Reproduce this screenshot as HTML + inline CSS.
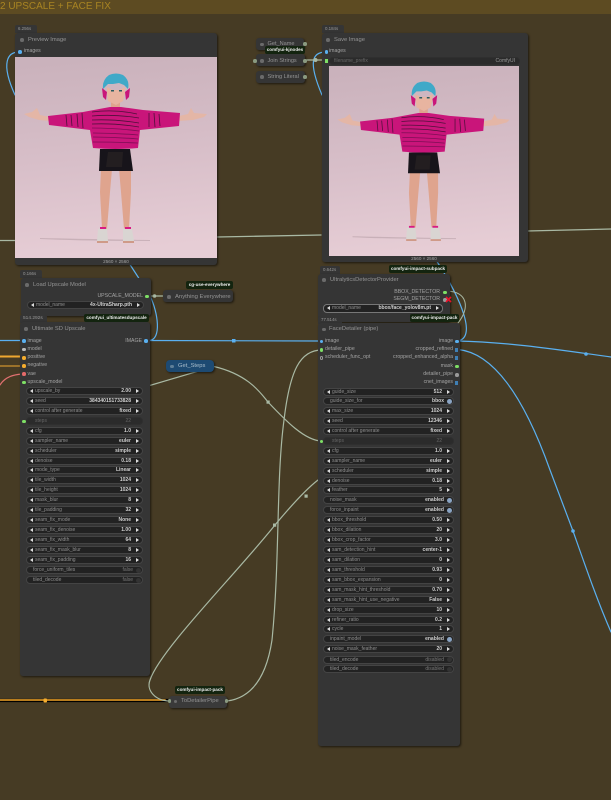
<!DOCTYPE html>
<html><head><meta charset="utf-8">
<style>
html,body{margin:0;padding:0;overflow:hidden;width:611px;height:800px;background:#463b24}
#page{width:611px;height:800px;overflow:hidden;background:#463b24;position:relative;font-family:"Liberation Sans",sans-serif;font-size:5.4px;color:#aaa;filter:blur(.3px)}
.a{position:absolute}
.band{left:0;top:0;width:611px;height:14px;background:#5d4b22}
.gt{left:0;top:1px;font-size:10px;line-height:12px;color:#a88422;white-space:nowrap}
.n{position:absolute;background:#353535;border-radius:3px;box-shadow:1px 1px 2px #0009}
.t{position:absolute;font-size:5.8px;line-height:8px;color:#959595;white-space:nowrap}
.d{position:absolute;width:3.5px;height:3.5px;border-radius:50%;background:#6b6b6b}
.badge{position:absolute;background:#353535;border-radius:2px 2px 0 0;color:#999;font-size:4.4px;line-height:8px;padding-left:3px;height:8px;box-sizing:border-box}
.tag{position:absolute;background:#13240f;color:#eee;font-size:4.6px;font-weight:bold;line-height:8px;height:8px;text-align:center;border-radius:2px;white-space:nowrap;z-index:5}
.l{position:absolute;font-size:5.2px;line-height:7px;color:#a4a4a4;white-space:nowrap}
.r{text-align:right}
.p{position:absolute;width:3.500px;height:3.500px;border-radius:50%}
.s{position:absolute;width:3.5px;height:3.5px;background:#3f7fb5}
.blue{background:#5ab0f0}.green{background:#7ee066}.org{background:#f5ad2e}.red{background:#e46a6a}.gray{background:#9a9a9a}
.col{position:absolute;left:0;top:0}
.w{position:absolute;height:8px;box-sizing:border-box;background:#222;border:1px solid #444;border-radius:4px;color:#8e8e8e;font-size:5px;line-height:6px;white-space:nowrap}
.w b{position:absolute;right:11px;top:0;color:#d0d0d0;font-weight:bold}
.w i{position:absolute;left:8px;top:0;font-style:normal}
.w:before{content:"";position:absolute;left:3px;top:1px;border:2px solid transparent;border-left:0;border-right:3px solid #ddd}
.w:after{content:"";position:absolute;right:3px;top:1px;border:2px solid transparent;border-right:0;border-left:3px solid #ddd}
.w.o:before,.w.o:after{display:none}
.w.o i{left:6px}
.w.o b{right:9px}
.w.o u{position:absolute;right:1px;top:.5px;width:5px;height:5px;border-radius:50%;background:#8aa4c4}
.w.off b{color:#777;font-weight:normal}
.w.off u{background:#333}
.w.st{background:#2b2b2b;border-color:#2f2f2f;color:#666}
.w.st:before,.w.st:after{display:none}
.w.st b{color:#666;font-weight:normal}
.img{position:absolute;overflow:hidden}
svg.links{position:absolute;left:0;top:0;z-index:1}
.top{position:absolute;left:0;top:0;width:611px;height:800px;z-index:2}
</style></head><body>
<div id="page">
<svg width="0" height="0" style="position:absolute"><defs>
<linearGradient id="bg" x1="0" y1="0" x2="0.1" y2="1"><stop offset="0" stop-color="#c9b1bb"/><stop offset=".55" stop-color="#d8bfc9"/><stop offset="1" stop-color="#e6cdd5"/></linearGradient>
<symbol id="girl" viewBox="0 0 202 202">
<rect width="202" height="202" fill="url(#bg)"/>
<path d="M25 181Q70 182 135 183L135 184Q70 184 25 182Z" fill="#a08a90" opacity=".4"/>
<path d="M9 57 17 55 22 51 25 58 35 60 35 64 24 63 14 60Z" fill="#e4b6a6"/>
<path d="M164 59 173 57 176 51 179 56 192 57 189 60 178 63 164 64Z" fill="#e4b6a6"/>
<path d="M86 112H97L95 135 92 172H87L85 135Z" fill="#dfa48e"/>
<path d="M104 112H116L116 135 114 172H109L106 135Z" fill="#dfa48e"/>
<path d="M96 44H105V52H96Z" fill="#dfa48e"/>
<path d="M33 59 68 55 95 50H106L128 53 165 56 164 69 125 73 123 91Q100 93 78 91L75 73 34 68Z" fill="#c9157a"/>
<g stroke="#3a1030" stroke-width=".8" fill="none" opacity=".85">
<path d="M51 58 52 69M56 58 57 69M62 57 63 70M67 56 68 71"/><path d="M134 56 134 70M139 56 140 70M144 57 145 69"/>
<path d="M77 55Q100 52 122 57M77 59Q100 57 124 61M77 63Q100 62 124 66M77 67Q100 66 124 70"/></g>
<g stroke="#7d0e55" stroke-width=".8" fill="none">
<path d="M77 71Q100 71 124 74M78 76Q100 76 123 78M78 80Q100 80 123 82M78 85Q100 85 123 86"/></g>
<path d="M85 92H115L118 114H84Z" fill="#17141a"/><path d="M93 95H108L107 110H91Z" fill="#231e20"/>
<path d="M83 172Q87 170 92 172L93 184H82Z" fill="#d9d5d2"/><path d="M108 172Q113 170 117 172L119 184H108Z" fill="#d9d5d2"/>
<path d="M85 170H91V172H85ZM110 170H116V172H110Z" fill="#d81c84"/>
<path d="M82 184H93V186H82ZM108 184H119V186H108Z" fill="#cf9a88"/>
<path d="M93 44 92 36 92 30 97 33 105 33 110 30 110 36 108 44 101 48Z" fill="#e8b4a0"/>
<path d="M87 31 88 40 91 43 92 35ZM115 31 114 40 111 43 110 35Z" fill="#c9157a"/>
<path d="M88 32Q87 23 94 18 101 15 108 18 115 23 113 32L109 28 104 26 98 27 93 27Z" fill="#3fa9c8"/>
<path d="M96 33h3v1.500h-3zM104 33h3v1.500h-3z" fill="#2b5b60"/>
</symbol></defs></svg>

<div class="a band"></div>
<div class="a gt">2 UPSCALE + FACE FIX</div>

<svg class="links" width="611" height="800" fill="none" stroke-linecap="round">
<path d="M0 240.500H20M217 237L321 235M527 231L611 229" stroke="#a9b9a4" stroke-width="1.300"/>
<path d="M0 700.500H170" stroke="#000" stroke-width="3.200"/>
<path d="M0 700H165" stroke="#d38f22" stroke-width="1.800"/>
<path d="M0 357H22M0 366H22" stroke="#f0a830" stroke-width="1.100"/>
<path d="M0 356H22" stroke="#f0a830" stroke-width=".9"/>
<path d="M0 385Q6 375 22 374" stroke="#e07070" stroke-width="1.200"/>
<path d="M19 52C8 52 0 62 15 95" stroke="#5ab0f0" stroke-width="1.200"/>
<path d="M326 52C312 52 308 62 322 95" stroke="#5ab0f0" stroke-width="1.200"/>
<path d="M129 263L140 280" stroke="#5ab0f0" stroke-width="1.200"/>
<path d="M150 296C158 312 162 340 149 340.500" stroke="#5ab0f0" stroke-width="1.200"/>
<path d="M0 340.500H23" stroke="#5ab0f0" stroke-width="1.200"/>
<path d="M146 340.500L320 341" stroke="#5ab0f0" stroke-width="1.200"/>
<path d="M436 260C462 300 478 340 456 341" stroke="#5ab0f0" stroke-width="1.200"/>
<path d="M456 341C510 342 560 350 611 357" stroke="#5ab0f0" stroke-width="1.200"/>
<path d="M458 349.500C495 353 525 400 550 470L573 531C585 565 597 600 611 632" stroke="#5ab0f0" stroke-width="1.200"/>
<path d="M447 291C468 292 470 308 458 323" stroke="#a9b9a4" stroke-width="1"/>
<path d="M148 386L214 366.500C250 375 262 395 268 402C285 420 305 441 322 441" stroke="#a9b9a4" stroke-width="1.200"/>
<path d="M170 701C155 701 146 690 150 680C160 650 235 575 275 525C290 507 305 490 318 480" stroke="#a9b9a4" stroke-width="1.200"/>
<path d="M227 701C250 698 266 680 272 640C280 560 276 480 284 420C290 370 300 350 322 350" stroke="#a9b9a4" stroke-width="1.200"/>
<path d="M300 60H326" stroke="#a9b9a4" stroke-width="1.200"/>
<path d="M148 296H163" stroke="#a9b9a4" stroke-width="1.200"/>
<rect x="43.500" y="698.500" width="3.500" height="4" rx="1" fill="#f5ad2e"/>
<rect x="232" y="339" width="3.500" height="3.500" fill="#5ab0f0"/>
<circle cx="586" cy="354" r="1.800" fill="#5ab0f0"/>
<circle cx="573" cy="531" r="1.800" fill="#5ab0f0"/>
<rect x="266.500" y="400.500" width="3.200" height="3.200" fill="#a9b9a4"/>
<rect x="273" y="523.500" width="3.200" height="3.200" fill="#a9b9a4"/>
<rect x="304.500" y="494.500" width="3.200" height="3.200" fill="#a9b9a4"/>
<circle cx="315.500" cy="60" r="2" fill="#a9b9a4"/>
<circle cx="154.500" cy="296" r="1.800" fill="#a9b9a4"/>
</svg>

<div class="top">
<div class="badge" style="left:15px;top:25px;width:22px">6.256s</div>
<div class="n" style="left:15px;top:33px;width:202px;height:232px"></div>
<div class="d" style="left:20px;top:38px"></div><div class="t" style="left:28px;top:36px">Preview Image</div>
<div class="p blue" style="left:18px;top:50px"></div><div class="l" style="left:24px;top:48px">images</div>
<div class="img" style="left:15px;top:57px;width:202px;height:201px"><svg width="202" height="202"><use href="#girl"/></svg></div>
<div class="l" style="left:15px;top:257.500px;width:202px;text-align:center;font-size:4.6px">2560 × 2560</div>

<div class="n" style="left:256px;top:38px;width:48px;height:12px"></div><div class="d" style="left:260px;top:42.500px"></div><div class="t" style="left:267.500px;top:40px;font-size:5.6px">Get_Name</div>
<div class="n" style="left:256px;top:54px;width:49px;height:12px"></div><div class="d" style="left:260px;top:59px"></div><div class="t" style="left:267.500px;top:56.500px;font-size:5.6px">Join Strings</div>
<div class="n" style="left:256px;top:71px;width:49px;height:12px"></div><div class="d" style="left:260px;top:75px"></div><div class="t" style="left:267.500px;top:72.500px;font-size:5.6px">String Literal</div>
<div class="p gray" style="left:303px;top:42px;background:#8a9a80"></div>
<div class="p gray" style="left:253px;top:59px;background:#8a9a80"></div>
<div class="p gray" style="left:303px;top:59px;background:#8a9a80"></div>
<div class="p gray" style="left:303px;top:75px;background:#8a9a80"></div>
<div class="tag" style="left:265px;top:46px;width:40px">comfyui-kjnodes</div>

<div class="badge" style="left:322px;top:25px;width:22px">0.184s</div>
<div class="n" style="left:321.500px;top:33px;width:206px;height:229px"></div>
<div class="d" style="left:326px;top:38px"></div><div class="t" style="left:334px;top:36px">Save Image</div>
<div class="p blue" style="left:324.500px;top:50px"></div><div class="l" style="left:329px;top:48px">images</div>
<div class="a green" style="left:324.500px;top:59px;width:3.500px;height:3.500px"></div>
<div class="w st" style="left:329px;top:57px;width:191px;height:8px"><i style="left:4px">filename_prefix</i><b style="right:4px;color:#999">ComfyUI</b></div>
<div class="img" style="left:329px;top:66px;width:190px;height:190px"><svg width="190" height="190"><use href="#girl"/></svg></div>
<div class="l" style="left:321px;top:255px;width:206px;text-align:center;font-size:4.6px">2560 × 2560</div>

<div class="badge" style="left:20px;top:270px;width:22px">0.166s</div>
<div class="n" style="left:21px;top:278px;width:130px;height:38px"></div>
<div class="d" style="left:25px;top:283px"></div><div class="t" style="left:33px;top:281px">Load Upscale Model</div>
<div class="l r" style="right:468px;top:293px">UPSCALE_MODEL</div><div class="p green" style="left:145px;top:294.500px"></div>
<div class="w" style="left:27px;top:301px;width:117px;height:8px"><i>model_name</i><b>4x-UltraSharp.pth</b></div>

<div class="n" style="left:163px;top:290px;width:70px;height:12px"></div><div class="d" style="left:167px;top:295px"></div><div class="t" style="left:175px;top:292.500px;font-size:5.900px">Anything Everywhere</div>
<div class="tag" style="left:186px;top:281px;width:47px">cg-use-everywhere</div>

<div class="badge" style="left:20px;top:315px;width:27px;font-size:4.8px">514.292s</div>
<div class="n" style="left:20px;top:322px;width:130px;height:354px"></div>
<div class="tag" style="left:84px;top:314px;width:65px">comfyui_ultimatesdupscale</div>
<div class="d" style="left:24px;top:327px"></div><div class="t" style="left:32px;top:324.500px">Ultimate SD Upscale</div>
<div class="p blue" style="left:22px;top:339px"></div><div class="l" style="left:27.500px;top:337.500px">image</div>
<div class="l r" style="right:469px;top:337.500px">IMAGE</div><div class="p blue" style="left:144px;top:339px"></div>
<div class="p" style="left:22px;top:347.500px;background:#bbb"></div><div class="l" style="left:27.500px;top:345.500px">model</div>
<div class="p org" style="left:22px;top:356px"></div><div class="l" style="left:27.500px;top:354px">positive</div>
<div class="p org" style="left:22px;top:364px"></div><div class="l" style="left:27.500px;top:362px">negative</div>
<div class="p red" style="left:22px;top:372px"></div><div class="l" style="left:27.500px;top:370.500px">vae</div>
<div class="p green" style="left:22px;top:380.500px"></div><div class="l" style="left:27.500px;top:378.500px">upscale_model</div>
<div class="p green" style="left:22px;top:419.500px"></div>

<div class="col" style="left:26px;width:117px">
<div class="w" style="top:387px;width:117px"><i>upscale_by</i><b>2.00</b></div>
<div class="w" style="top:397px;width:117px"><i>seed</i><b>384340151733828</b></div>
<div class="w" style="top:407px;width:117px"><i>control after generate</i><b>fixed</b></div>
<div class="w st" style="top:417px;width:117px"><i>steps</i><b>22</b></div>
<div class="w" style="top:427px;width:117px"><i>cfg</i><b>1.0</b></div>
<div class="w" style="top:437px;width:117px"><i>sampler_name</i><b>euler</b></div>
<div class="w" style="top:447px;width:117px"><i>scheduler</i><b>simple</b></div>
<div class="w" style="top:457px;width:117px"><i>denoise</i><b>0.18</b></div>
<div class="w" style="top:466px;width:117px"><i>mode_type</i><b>Linear</b></div>
<div class="w" style="top:476px;width:117px"><i>tile_width</i><b>1024</b></div>
<div class="w" style="top:486px;width:117px"><i>tile_height</i><b>1024</b></div>
<div class="w" style="top:496px;width:117px"><i>mask_blur</i><b>8</b></div>
<div class="w" style="top:506px;width:117px"><i>tile_padding</i><b>32</b></div>
<div class="w" style="top:516px;width:117px"><i>seam_fix_mode</i><b>None</b></div>
<div class="w" style="top:526px;width:117px"><i>seam_fix_denoise</i><b>1.00</b></div>
<div class="w" style="top:536px;width:117px"><i>seam_fix_width</i><b>64</b></div>
<div class="w" style="top:546px;width:117px"><i>seam_fix_mask_blur</i><b>8</b></div>
<div class="w" style="top:556px;width:117px"><i>seam_fix_padding</i><b>16</b></div>
<div class="w o off" style="top:566px;width:117px"><i>force_uniform_tiles</i><b>false</b><u></u></div>
<div class="w o off" style="top:576px;width:117px"><i>tiled_decode</i><b>false</b><u></u></div>
</div>

<div class="n" style="left:166px;top:360px;width:48px;height:12px;background:#1d4a72;border-radius:4px"></div><div class="d" style="left:170px;top:364.500px;background:#5f7f98"></div><div class="t" style="left:178px;top:362px;color:#a9bdcb">Get_Steps</div>

<div class="badge" style="left:320px;top:266px;width:20px">0.642s</div>
<div class="n" style="left:318px;top:274px;width:132px;height:48px"></div>
<div class="d" style="left:322px;top:278px"></div><div class="t" style="left:330px;top:276px">UltralyticsDetectorProvider</div>
<div class="l r" style="right:171px;top:288.500px">BBOX_DETECTOR</div><div class="p green" style="left:443px;top:290.500px"></div>
<div class="l r" style="right:171px;top:296px">SEGM_DETECTOR</div><div class="p gray" style="left:443px;top:298px"></div>
<div class="w" style="left:323px;top:304px;width:120px;height:9px;border-color:#777"><i>model_name</i><b>bbox/face_yolov8m.pt</b></div>
<div class="tag" style="left:389px;top:264.500px;width:58px">comfyui-impact-subpack</div>
<svg class="a" style="left:445px;top:295.500px;z-index:6" width="8" height="8"><path d="M1 1L6 6M6 1L1 6" stroke="#e8102a" stroke-width="1.600"/></svg>

<div class="badge" style="left:318px;top:316px;width:24px">77.514s</div>
<div class="n" style="left:318px;top:323px;width:142px;height:423px"></div>
<div class="tag" style="left:410px;top:314px;width:49px">comfyui-impact-pack</div>
<div class="d" style="left:322px;top:327.500px"></div><div class="t" style="left:329px;top:325px">FaceDetailer (pipe)</div>
<div class="p blue" style="left:319.500px;top:339.500px"></div><div class="l" style="left:325px;top:337.500px">image</div>
<div class="p green" style="left:319.500px;top:348px"></div><div class="l" style="left:325px;top:346px">detailer_pipe</div>
<div class="p" style="left:319.500px;top:356px;border:.5px solid #999;box-sizing:border-box"></div><div class="l" style="left:325px;top:354px">scheduler_func_opt</div>
<div class="l r" style="right:158px;top:337.500px">image</div><div class="p blue" style="left:455px;top:339.500px"></div>
<div class="l r" style="right:158px;top:346px">cropped_refined</div><div class="s" style="left:454.500px;top:348px"></div>
<div class="l r" style="right:158px;top:354px">cropped_enhanced_alpha</div><div class="s" style="left:454.500px;top:356px"></div>
<div class="l r" style="right:158px;top:362.500px">mask</div><div class="p green" style="left:455px;top:364.500px"></div>
<div class="l r" style="right:158px;top:370.500px">detailer_pipe</div><div class="p gray" style="left:455px;top:373px"></div>
<div class="l r" style="right:158px;top:379px">cnet_images</div><div class="s" style="left:454.500px;top:381px"></div>
<div class="p green" style="left:319.500px;top:439.500px"></div>

<div class="col" style="left:323px;width:131px">
<div class="w" style="top:387.500px;width:131px"><i>guide_size</i><b>512</b></div>
<div class="w o" style="top:397px;width:131px"><i>guide_size_for</i><b>bbox</b><u></u></div>
<div class="w" style="top:407px;width:131px"><i>max_size</i><b>1024</b></div>
<div class="w" style="top:417px;width:131px"><i>seed</i><b>12346</b></div>
<div class="w" style="top:427px;width:131px"><i>control after generate</i><b>fixed</b></div>
<div class="w st" style="top:437px;width:131px"><i>steps</i><b>22</b></div>
<div class="w" style="top:447px;width:131px"><i>cfg</i><b>1.0</b></div>
<div class="w" style="top:457px;width:131px"><i>sampler_name</i><b>euler</b></div>
<div class="w" style="top:467px;width:131px"><i>scheduler</i><b>simple</b></div>
<div class="w" style="top:477px;width:131px"><i>denoise</i><b>0.18</b></div>
<div class="w" style="top:486px;width:131px"><i>feather</i><b>5</b></div>
<div class="w o" style="top:496px;width:131px"><i>noise_mask</i><b>enabled</b><u></u></div>
<div class="w o" style="top:506px;width:131px"><i>force_inpaint</i><b>enabled</b><u></u></div>
<div class="w" style="top:516px;width:131px"><i>bbox_threshold</i><b>0.50</b></div>
<div class="w" style="top:526px;width:131px"><i>bbox_dilation</i><b>20</b></div>
<div class="w" style="top:536px;width:131px"><i>bbox_crop_factor</i><b>3.0</b></div>
<div class="w" style="top:546px;width:131px"><i>sam_detection_hint</i><b>center-1</b></div>
<div class="w" style="top:556px;width:131px"><i>sam_dilation</i><b>0</b></div>
<div class="w" style="top:566px;width:131px"><i>sam_threshold</i><b>0.93</b></div>
<div class="w" style="top:576px;width:131px"><i>sam_bbox_expansion</i><b>0</b></div>
<div class="w" style="top:586px;width:131px"><i>sam_mask_hint_threshold</i><b>0.70</b></div>
<div class="w" style="top:596px;width:131px"><i>sam_mask_hint_use_negative</i><b>False</b></div>
<div class="w" style="top:605.500px;width:131px"><i>drop_size</i><b>10</b></div>
<div class="w" style="top:615.500px;width:131px"><i>refiner_ratio</i><b>0.2</b></div>
<div class="w" style="top:625px;width:131px"><i>cycle</i><b>1</b></div>
<div class="w o" style="top:635px;width:131px"><i>inpaint_model</i><b>enabled</b><u></u></div>
<div class="w" style="top:645px;width:131px"><i>noise_mask_feather</i><b>20</b></div>
<div class="w o off" style="top:655.500px;width:131px"><i>tiled_encode</i><b>disabled</b><u></u></div>
<div class="w o off" style="top:665px;width:131px"><i>tiled_decode</i><b>disabled</b><u></u></div>
</div>

<div class="n" style="left:169px;top:695.500px;width:58px;height:12px;background:#3a3a3a"></div>
<div class="d" style="left:173.500px;top:699.500px"></div><div class="t" style="left:181px;top:697px">ToDetailerPipe</div>
<div class="p gray" style="left:167.500px;top:699px;background:#8a9a80"></div>
<div class="p gray" style="left:224.500px;top:699px;background:#8a9a80"></div>
<div class="tag" style="left:175px;top:686px;width:50px">comfyui-impact-pack</div>
</div>
</div>
</body></html>
